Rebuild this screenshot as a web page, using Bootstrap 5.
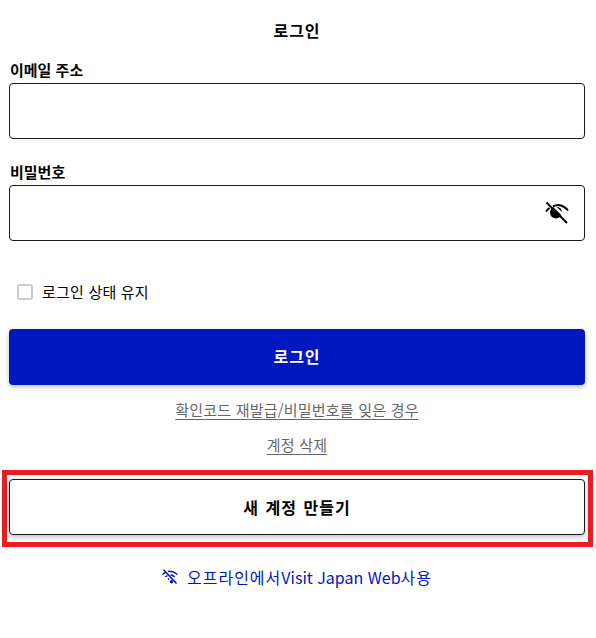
<!DOCTYPE html>
<html lang="ko">
<head>
<meta charset="utf-8">
<title>로그인</title>
<link href="https://cdn.jsdelivr.net/npm/bootstrap@5.3.0/dist/css/bootstrap.min.css" rel="stylesheet">
<style>
html,body{background:#fff;}
body{font-family:"Noto Sans CJK KR","Liberation Sans",sans-serif;font-size:15px;color:#000;width:596px;height:638px;overflow:hidden;}
.login-page{width:576px;margin-left:9px;}
.login-title{font-size:16px;font-weight:700;letter-spacing:1px;line-height:22px;margin:0;padding-top:19px;height:60px;text-align:center;}
.field-label{display:block;font-size:15px;font-weight:700;line-height:20px;margin:0 0 3px;height:20px;padding-left:1px;}
.field-box{display:block;width:100%;height:56px;border:1px solid #1a1a1a;border-radius:4px;background:#fff;padding:0 12px;}
.field-wrap{margin-bottom:23px;}
.eye-btn{position:absolute;right:16px;top:16px;width:24px;height:24px;border:0;background:none;padding:0;line-height:0;}
.keep-row{margin-top:43px;margin-left:8px;height:16px;gap:9px;}
.keep-box{width:16px;height:16px;margin:0;border:2px solid #ccc;border-radius:2px;appearance:none;background:#fff;flex:none;}
.keep-label{font-size:15px;letter-spacing:.2px;line-height:15px;margin:0;padding-bottom:1px;}
.btn-login{display:block;width:100%;height:56px;margin-top:29px;padding-bottom:4px;background:#0018c0;border:0;border-radius:4px;color:#fff;font-size:16px;font-weight:700;letter-spacing:1px;box-shadow:0 2px 5px rgba(0,0,0,.25);}
.sub-link{display:block;width:max-content;margin:0 auto;color:#666;font-size:15px;letter-spacing:.2px;line-height:20px;text-decoration:underline;text-underline-offset:3px;}
.sub-first{margin-top:15px;}
.sub-second{margin-top:15px;}
.signup-frame{margin:15px 5px 0 -7px;width:591px;height:77px;border:5px solid #ed1c24;padding:4px 3px 0 2px;}
.btn-signup{display:block;width:100%;height:56px;background:#fff;border:1px solid #1a1a1a;border-radius:4px;color:#000;font-size:16px;font-weight:700;letter-spacing:1px;word-spacing:1px;box-shadow:0 2px 5px rgba(0,0,0,.25);}
.offline-link{margin-top:19px;gap:9px;color:#0018c0;font-size:16px;line-height:22px;text-decoration:none;}
.hangul-wide{letter-spacing:1px;}
</style>
</head>
<body>
<main class="login-page">
  <h1 class="login-title">로그인</h1>
  <div class="field-wrap">
    <label class="field-label" for="em">이메일 주소</label>
    <input class="field-box" id="em" type="text">
  </div>
  <div class="field-wrap position-relative mb-0">
    <label class="field-label" for="pw">비밀번호</label>
    <div class="position-relative">
      <input class="field-box" id="pw" type="password">
      <button class="eye-btn" type="button" aria-label="비밀번호 표시">
        <svg width="24" height="24" viewBox="0 0 24 24"><circle cx="11" cy="11.500" r="6" fill="#000"/><path stroke="#fff" stroke-width="2.500" d="M5 1 25 21"/><path fill="none" stroke="#000" stroke-width="2" d="M1.500 1.500 22 22M8 5.500C13 2.800 19 4 23 9.500M1 10.500C2 9 3 8 4.500 7"/></svg>
      </button>
    </div>
  </div>
  <div class="keep-row d-flex align-items-center">
    <input class="keep-box" id="keep" type="checkbox">
    <label class="keep-label" for="keep">로그인 상태 유지</label>
  </div>
  <button class="btn-login" type="button">로그인</button>
  <a class="sub-link sub-first" href="#">확인코드 재발급/비밀번호를 잊은 경우</a>
  <a class="sub-link sub-second" href="#">계정 삭제</a>
  <div class="signup-frame">
    <button class="btn-signup" type="button">새 계정 만들기</button>
  </div>
  <a class="offline-link d-flex justify-content-center align-items-center" href="#">
    <svg width="16" height="16" viewBox="0 0 16 16"><path fill="none" stroke="#0018c0" stroke-width="1.400" d="M.5 5.500C1.500 4.500 2.500 3.900 3.500 3.500M6 2.400C9 2 12.500 3 15.500 5.500M3.200 8C3.800 7.400 4.600 6.900 5.500 6.600M8.500 5.800C10 6 11.500 6.800 12.800 8M6 10.400C6.300 10.100 6.700 9.900 7.200 9.800"/><circle cx="9.500" cy="12.800" r="1.700" fill="#0018c0"/><path stroke="#0018c0" stroke-width="1.600" d="M1.500 .8 14.500 14.500"/></svg>
    <span><span class="hangul-wide">오프라인에서</span>Visit Japan Web<span class="hangul-wide">사용</span></span>
  </a>
</main>
<script src="https://cdn.jsdelivr.net/npm/bootstrap@5.3.0/dist/js/bootstrap.bundle.min.js"></script>
</body>
</html>
